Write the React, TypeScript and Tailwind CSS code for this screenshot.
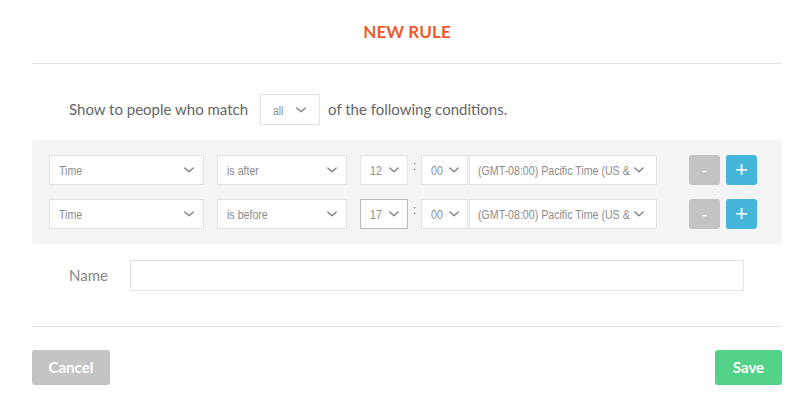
import React from "react";

const Chevron = ({ className = "" }: { className?: string }) => (
  <svg width="10" height="6" viewBox="0 0 10 6" className={className} fill="none">
    <path d="M0.8 1 L5 4.7 L9.2 1" stroke="#808080" strokeWidth="1.4" strokeLinecap="round" strokeLinejoin="round" />
  </svg>
);

const Select = ({
  label,
  className = "",
  focused = false,
  pl = "pl-[9px]",
  pr = "pr-[8px]",
  gap = "ml-[3px]",
}: {
  label: string;
  className?: string;
  focused?: boolean;
  pl?: string;
  pr?: string;
  gap?: string;
}) => (
  <div
    className={
      "h-[30px] bg-white border flex items-center " +
      pl +
      " " +
      pr +
      " " +
      (focused ? "border-[#b8b8b8] " : "border-[#e3e3e3] ") +
      className
    }
    style={{ fontFamily: '"Liberation Sans", Arial, sans-serif' }}
  >
    <span className="flex-1 min-w-0 overflow-hidden whitespace-nowrap">
      <span className="inline-block origin-left scale-x-[0.85] text-[12.5px] text-[#8c8c8c]">{label}</span>
    </span>
    <Chevron className={"shrink-0 " + gap} />
  </div>
);

const TZ = "(GMT-08:00) Pacific Time (US & Canada)";

const Row = ({ cond, hour, focused }: { cond: string; hour: string; focused?: boolean }) => (
  <div className="flex items-center h-[30px]">
    <Select label="Time" className="w-[155px]" pr="pr-[9px]" />
    <Select label={cond} className="w-[130px] ml-[13px]" pr="pr-[9px]" />
    <Select label={hour} className="w-[48px] ml-[13px]" focused={focused} />
    <div
      className="w-[13px] text-center text-[#777] text-[13px] -mt-[8px]"
      style={{ fontFamily: '"Liberation Sans", Arial, sans-serif' }}
    >
      :
    </div>
    <Select label="00" className="w-[47px]" />
    <Select label={TZ} className="w-[188px] ml-px" pl="pl-[8px]" pr="pr-[12px]" gap="ml-[2px]" />
    <button
      className="ml-[32px] w-[31px] h-[30px] rounded-[3px] bg-[#c4c4c4] text-white text-[17px] leading-none flex items-center justify-center"
      style={{ fontFamily: '"Liberation Sans", Arial, sans-serif' }}
    >
      -
    </button>
    <button
      className="ml-[6px] w-[31px] h-[30px] rounded-[3px] bg-[#45b5d9] text-white text-[22px] leading-none flex items-center justify-center"
      style={{ fontFamily: '"Liberation Sans", Arial, sans-serif' }}
    >
      +
    </button>
  </div>
);

export default function App() {
  return (
    <div className="w-[811px] h-[406px] bg-white pl-[32px] pr-[29px]" style={{ fontFamily: 'Lato, "Open Sans", sans-serif' }}>
      <div className="h-[63px] flex items-center justify-center">
        <h1 className="text-[17px] font-bold text-[#f05a2a] tracking-[0.1px]">NEW RULE</h1>
      </div>
      <div className="h-px bg-[#e2e2e2]" />
      <div className="mt-[30px] flex items-center pl-[37px] h-[31px]">
        <span className="text-[15px] text-[#666]">Show to people who match</span>
        <div
          className="ml-[12px] w-[60px] h-[31px] border border-[#e3e3e3] flex items-center pl-[12px] pr-[13px]"
          style={{ fontFamily: '"Liberation Sans", Arial, sans-serif' }}
        >
          <span className="flex-1 min-w-0">
            <span className="inline-block origin-left scale-x-[0.85] text-[12px] text-[#8c8c8c]">all</span>
          </span>
          <Chevron />
        </div>
        <span className="ml-[8px] text-[15px] text-[#666]">of the following conditions.</span>
      </div>
      <div className="mt-[15px] bg-[#f5f5f5] rounded-[3px] pl-[17px] pt-[15px] pb-[15px] flex flex-col gap-[14px]">
        <Row cond="is after" hour="12" />
        <Row cond="is before" hour="17" focused />
      </div>
      <div className="mt-[16px] flex items-center h-[31px]">
        <span className="pl-[37px] w-[98px] text-[15px] text-[#888]">Name</span>
        <div className="w-[614px] h-[31px] border border-[#e3e3e3] bg-white" />
      </div>
      <div className="mt-[35px] h-px bg-[#e2e2e2]" />
      <div className="mt-[23px] flex justify-between">
        <button className="w-[78px] h-[35px] rounded-[3px] bg-[#c4c4c4] text-white text-[15px] font-bold">Cancel</button>
        <button className="w-[67px] h-[35px] rounded-[3px] bg-[#52d389] text-white text-[15px] font-bold">Save</button>
      </div>
    </div>
  );
}
